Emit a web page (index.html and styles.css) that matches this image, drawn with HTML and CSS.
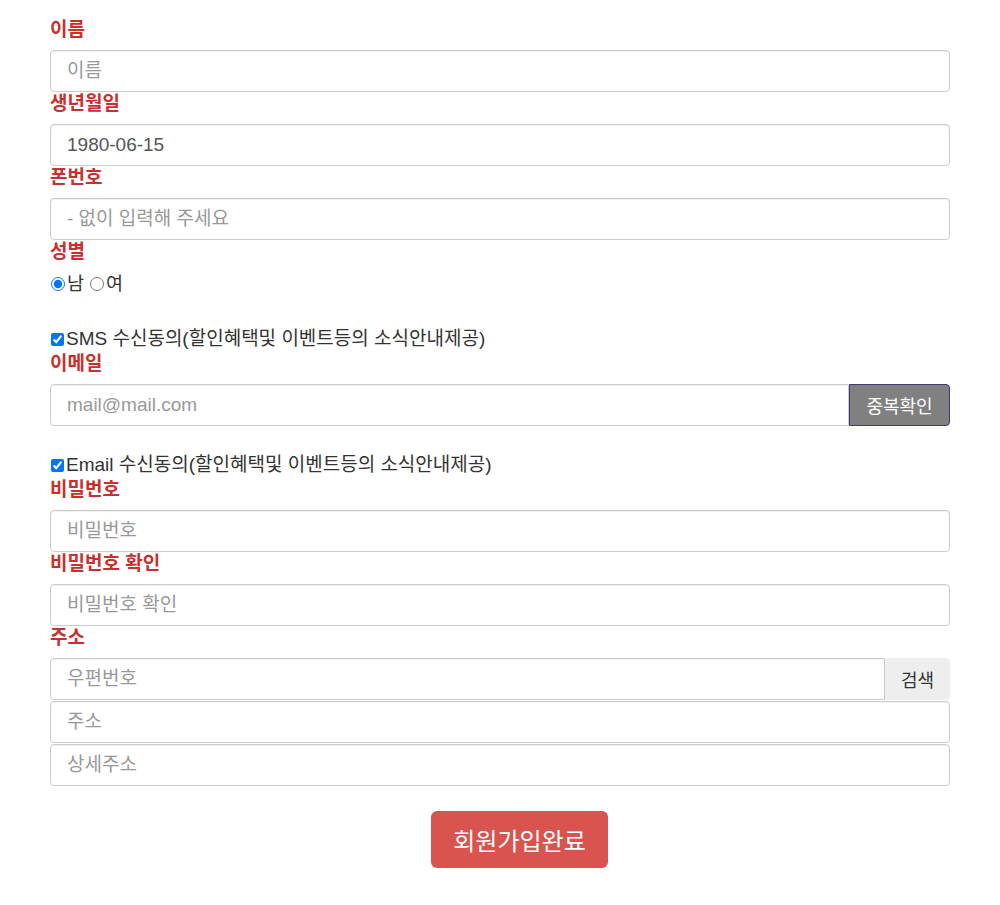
FILE: index.html
```html
<!DOCTYPE html>
<html lang="ko">
<head>
  <meta charset="UTF-8" />
  <title>회원가입</title>
  <link rel="stylesheet" href="styles.css">
</head>
<body>

<div class="join-container">
  <form id="join-form">
    <label class="field-label" for="name">이름</label>
    <input type="text" id="name" class="form-control" placeholder="이름" />

    <label class="field-label" for="birth">생년월일</label>
    <input type="text" id="birth" class="form-control" value="1980-06-15" />

    <label class="field-label" for="phone">폰번호</label>
    <input type="text" id="phone" class="form-control" placeholder="- 없이 입력해 주세요" />

    <label class="field-label">성별</label>
    <div class="radio-row">
      <label><input type="radio" name="gender" value="M" checked />남</label>
      <label><input type="radio" name="gender" value="F" />여</label>
    </div>

    <div class="check-row sms">
      <label><input type="checkbox" name="sms" checked />SMS 수신동의(할인혜택및 이벤트등의 소식안내제공)</label>
    </div>

    <label class="field-label" for="email">이메일</label>
    <div class="input-group">
      <input type="text" id="email" class="form-control" placeholder="mail@mail.com" />
      <button type="button" class="btn-check">중복확인</button>
    </div>

    <div class="check-row mail">
      <label><input type="checkbox" name="mail" checked />Email 수신동의(할인혜택및 이벤트등의 소식안내제공)</label>
    </div>

    <label class="field-label" for="pw">비밀번호</label>
    <input type="password" id="pw" class="form-control" placeholder="비밀번호" />

    <label class="field-label" for="pw2">비밀번호 확인</label>
    <input type="password" id="pw2" class="form-control" placeholder="비밀번호 확인" />

    <label class="field-label" for="zip">주소</label>
    <div class="address-group">
      <div class="input-group">
        <input type="text" id="zip" class="form-control" placeholder="우편번호" />
        <button type="button" class="btn-search">검색</button>
      </div>
      <input type="text" class="form-control" placeholder="주소" />
      <input type="text" class="form-control" placeholder="상세주소" />
    </div>

    <div class="submit-row">
      <button type="submit" class="btn-submit">회원가입완료</button>
    </div>
  </form>
</div>

</body>
</html>
```

FILE: styles.css
```css
body {
  font-family: "Liberation Sans", "Noto Sans CJK KR", sans-serif;
  margin: 0;
  color: #333;
  background: #fff;
}

.join-container {
  width: 900px;
  margin: 0 auto;
  padding-top: 18px;
}

.field-label {
  display: block;
  color: #c9302c;
  font-weight: bold;
  font-size: 19px;
  line-height: 24px;
  margin-bottom: 8px;
}

.form-control {
  display: block;
  width: 100%;
  height: 42px;
  padding: 0 16px;
  font-family: inherit;
  font-size: 19px;
  color: #555;
  border: 1px solid #ccc;
  border-radius: 4px;
  box-sizing: border-box;
  box-shadow: inset 0 1px 1px rgba(0, 0, 0, 0.06);
  margin: 0;
}
.form-control::placeholder {
  color: #999;
}

.radio-row, .check-row {
  font-size: 18.5px;
  color: #333;
}
.radio-row {
  display: flex;
  gap: 5px;
  line-height: 24px;
}
.radio-row input {
  margin: 0 2px 0 1px;
  width: 14px;
  height: 14px;
  vertical-align: -1px;
}
.check-row {
  font-size: 19px;
  line-height: 26px;
}
.check-row input {
  margin: 0 2px 0 1px;
  width: 13px;
  height: 13px;
  vertical-align: -1px;
}
.check-row.sms {
  margin-top: 30px;
}
.check-row.mail {
  margin-top: 26px;
}

.input-group {
  display: flex;
}
.input-group .form-control {
  flex: 1;
  border-top-right-radius: 0;
  border-bottom-right-radius: 0;
}
.btn-check, .btn-search {
  font-family: inherit;
  font-size: 18px;
  height: 42px;
  border-radius: 0 4px 4px 0;
  cursor: pointer;
}
.btn-check {
  width: 101px;
  background-color: #808080;
  color: #fff;
  border: 1px solid #3c3a6e;
}
.btn-search {
  width: 65px;
  background-color: #eee;
  color: #333;
  border: none;
}

.address-group {
  display: flex;
  flex-direction: column;
  gap: 1px;
}

.submit-row {
  text-align: center;
  padding-left: 39px;
  margin-top: 25px;
  padding-bottom: 30px;
}
.btn-submit {
  font-family: inherit;
  font-size: 24px;
  color: #fff;
  background-color: #d9534f;
  border: none;
  border-radius: 6px;
  width: 177px;
  height: 57px;
  cursor: pointer;
}
```
